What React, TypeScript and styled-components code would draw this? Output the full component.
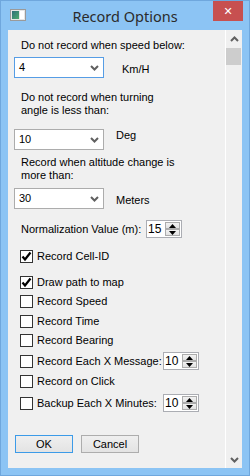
import { createGlobalStyle, styled } from 'styled-components'

const GlobalStyle = createGlobalStyle`
	html, body {
		margin: 0;
		padding: 0;
		background: #8cc4f4;
	}
	body {
		font-family: 'Liberation Sans', Arial, sans-serif;
		font-size: 11px;
		color: #000;
	}
`

type CheckItem = {
	label: string
	checked?: boolean
	mt: number
	spin?: string
}

const checks: CheckItem[] = [
	{ label: 'Record Cell-ID', checked: true, mt: 12 },
	{ label: 'Draw path to map', checked: true, mt: 13 },
	{ label: 'Record Speed', mt: 6 },
	{ label: 'Record Time', mt: 7 },
	{ label: 'Record Bearing', mt: 6 },
	{ label: 'Record Each X Message:', mt: 5, spin: '10' },
	{ label: 'Record on Click', mt: 5 },
	{ label: 'Backup Each X Minutes:', mt: 6, spin: '10' },
]

function Chevron({ up }: { up?: boolean }) {
	return (
		<svg width="9" height="6" viewBox="0 0 9 6">
			<path
				d={up ? 'M1 5 L4.5 1.5 L8 5' : 'M1 1 L4.5 4.5 L8 1'}
				fill="none"
				stroke="#606060"
				strokeWidth="2"
			/>
		</svg>
	)
}

function Spinner({ value }: { value: string }) {
	return (
		<SpinBox>
			<SpinValue>{value}</SpinValue>
			<SpinButtons>
				<SpinBtn>
					<svg width="7" height="4" viewBox="0 0 7 4">
						<path d="M0 4 L3.5 0 L7 4 Z" fill="#000" />
					</svg>
				</SpinBtn>
				<SpinBtn>
					<svg width="7" height="4" viewBox="0 0 7 4">
						<path d="M0 0 L3.5 4 L7 0 Z" fill="#000" />
					</svg>
				</SpinBtn>
			</SpinButtons>
		</SpinBox>
	)
}

function Check({ checked }: { checked?: boolean }) {
	return (
		<Box>
			{checked && (
				<svg width="11" height="11" viewBox="0 0 11 11">
					<path d="M1.5 5.5 L4 8.5 L9.5 1.5" fill="none" stroke="#000" strokeWidth="2.2" />
				</svg>
			)}
		</Box>
	)
}

export default function App() {
	return (
		<>
			<GlobalStyle />
			<Window>
				<TitleBar>
					<AppIcon>
						<svg width="16" height="12" viewBox="0 0 16 12">
							<defs>
								<linearGradient id="ig" x1="0" y1="0" x2="1" y2="1">
									<stop offset="0" stopColor="#2f6f7a" />
									<stop offset="1" stopColor="#4caa6e" />
								</linearGradient>
							</defs>
							<rect x="0.5" y="0.5" width="15" height="11" fill="#e6e6e6" stroke="#9a9a9a" />
							<rect x="2" y="2" width="7" height="8" fill="url(#ig)" />
							<rect x="10" y="2" width="4" height="8" fill="#fff" />
						</svg>
					</AppIcon>
					<Title>Record Options</Title>
					<CloseButton>✕</CloseButton>
				</TitleBar>
				<Client>
					<Content>
						<Label $mt={9}>Do not record when speed below:</Label>
						<SelectRow $mt={5}>
							<Select $focus>
								<span>4</span>
								<Chevron />
							</Select>
							<Unit $ml={18} $dy={6}>Km/H</Unit>
						</SelectRow>
						<Label $mt={13}>
							Do not record when turning
							<br />
							angle is less than:
						</Label>
						<SelectRow $mt={12}>
							<Select>
								<span>10</span>
								<Chevron />
							</Select>
							<Unit $ml={12} $dy={0}>Deg</Unit>
						</SelectRow>
						<Label $mt={6}>
							Record when altitude change is
							<br />
							more than:
						</Label>
						<SelectRow $mt={6}>
							<Select>
								<span>30</span>
								<Chevron />
							</Select>
							<Unit $ml={12} $dy={6}>Meters</Unit>
						</SelectRow>
						<NormRow>
							<NormText>Normalization Value (m):</NormText>
							<Spinner value="15" />
						</NormRow>
						{checks.map(c => (
							<CheckRow key={c.label} $mt={c.mt}>
								<Check checked={c.checked} />
								<CheckLabel $w={c.spin ? 126 : undefined}>{c.label}</CheckLabel>
								{c.spin && <Spinner value={c.spin} />}
							</CheckRow>
						))}
						<ButtonRow>
							<Button $default>OK</Button>
							<Button>Cancel</Button>
						</ButtonRow>
					</Content>
					<ScrollBar>
						<ScrollArrow>
							<Chevron up />
						</ScrollArrow>
						<Thumb />
						<ScrollTrack />
						<ScrollArrow>
							<Chevron />
						</ScrollArrow>
					</ScrollBar>
				</Client>
			</Window>
		</>
	)
}

const Window = styled.div`
	width: 250px;
	height: 476px;
	box-sizing: border-box;
	border: 1px solid #6fa7dd;
	background: #8cc4f4;
	display: flex;
	flex-direction: column;
`

const TitleBar = styled.header`
	height: 29px;
	display: grid;
	grid-template-columns: 1fr auto 1fr;
	align-items: start;
`

const AppIcon = styled.div`
	margin: 8px 0 0 9px;
	height: 12px;
	display: flex;
`

const Title = styled.div`
	font-family: 'Noto Sans', 'Open Sans', sans-serif;
	font-size: 14.5px;
	color: #2b2b2b;
	line-height: 20px;
	margin-top: 5px;
`

const CloseButton = styled.div`
	justify-self: end;
	width: 30px;
	height: 20px;
	margin-right: 6px;
	background: #c75050;
	color: #fff;
	font-family: 'DejaVu Sans', sans-serif;
	font-size: 11px;
	font-weight: bold;
	display: flex;
	align-items: center;
	justify-content: center;
`

const Client = styled.main`
	flex: 1;
	margin: 0 7px 7px 7px;
	background: #f0f0f0;
	display: flex;
	min-height: 0;
`

const Content = styled.div`
	flex: 1;
	padding-left: 6px;
	display: flex;
	flex-direction: column;
	align-items: flex-start;
`

const Label = styled.div<{ $mt: number }>`
	margin: ${p => p.$mt}px 0 0 7px;
	line-height: 13px;
	white-space: nowrap;
`

const SelectRow = styled.div<{ $mt: number }>`
	display: flex;
	align-items: flex-start;
	margin-top: ${p => p.$mt}px;
`

const Select = styled.div<{ $focus?: boolean }>`
	width: 90px;
	height: 21px;
	box-sizing: border-box;
	border: 1px solid ${p => (p.$focus ? '#569de5' : '#acacac')};
	background: #fff;
	display: flex;
	align-items: center;
	justify-content: space-between;
	padding: 0 4px 0 4px;
	line-height: 13px;
`

const Unit = styled.span<{ $ml: number; $dy: number }>`
	margin-left: ${p => p.$ml}px;
	margin-top: ${p => p.$dy}px;
	line-height: 13px;
`

const NormRow = styled.div`
	display: flex;
	align-items: center;
	margin-top: 11px;
`

const NormText = styled.span`
	width: 125px;
	margin-left: 7px;
	line-height: 13px;
`

const SpinBox = styled.div`
	width: 36px;
	height: 18px;
	box-sizing: border-box;
	border: 1px solid #abadb3;
	background: #fff;
	display: flex;
`

const SpinValue = styled.span`
	flex: 1;
	font-size: 12px;
	line-height: 16px;
	padding-left: 1px;
`

const SpinButtons = styled.div`
	width: 15px;
	display: flex;
	flex-direction: column;
	padding: 1px 1px 1px 0;
	gap: 0;
`

const SpinBtn = styled.div`
	flex: 1;
	box-sizing: border-box;
	border: 1px solid #acacac;
	background: linear-gradient(#f2f2f2, #e2e2e2);
	display: flex;
	align-items: center;
	justify-content: center;
`

const CheckRow = styled.div<{ $mt: number }>`
	display: flex;
	align-items: center;
	margin: ${p => p.$mt}px 0 0 6px;
`

const Box = styled.div`
	width: 13px;
	height: 13px;
	box-sizing: border-box;
	border: 1px solid #333;
	background: #fff;
	display: flex;
	align-items: center;
	justify-content: center;
`

const CheckLabel = styled.span<{ $w?: number }>`
	margin-left: 4px;
	line-height: 13px;
	white-space: nowrap;
	${p => (p.$w ? `width: ${p.$w}px;` : '')}
`

const ButtonRow = styled.div`
	display: flex;
	gap: 8px;
	margin: 23px 0 0 1px;
`

const Button = styled.button<{ $default?: boolean }>`
	width: 58px;
	height: 18px;
	box-sizing: border-box;
	border: 1px solid ${p => (p.$default ? '#3c9be8' : '#adadad')};
	background: linear-gradient(#efefef, #e3e3e3);
	font-family: 'Liberation Sans', Arial, sans-serif;
	font-size: 11px;
	padding: 0;
	line-height: 14px;
	color: #000;
`

const ScrollBar = styled.aside`
	width: 16px;
	border-left: 1px solid #fff;
	display: flex;
	flex-direction: column;
`

const ScrollArrow = styled.div`
	height: 17px;
	display: flex;
	align-items: center;
	justify-content: center;
`

const Thumb = styled.div`
	height: 17px;
	margin: 1px 1px 0 0;
	background: #cdcdcd;
`

const ScrollTrack = styled.div`
	flex: 1;
`
